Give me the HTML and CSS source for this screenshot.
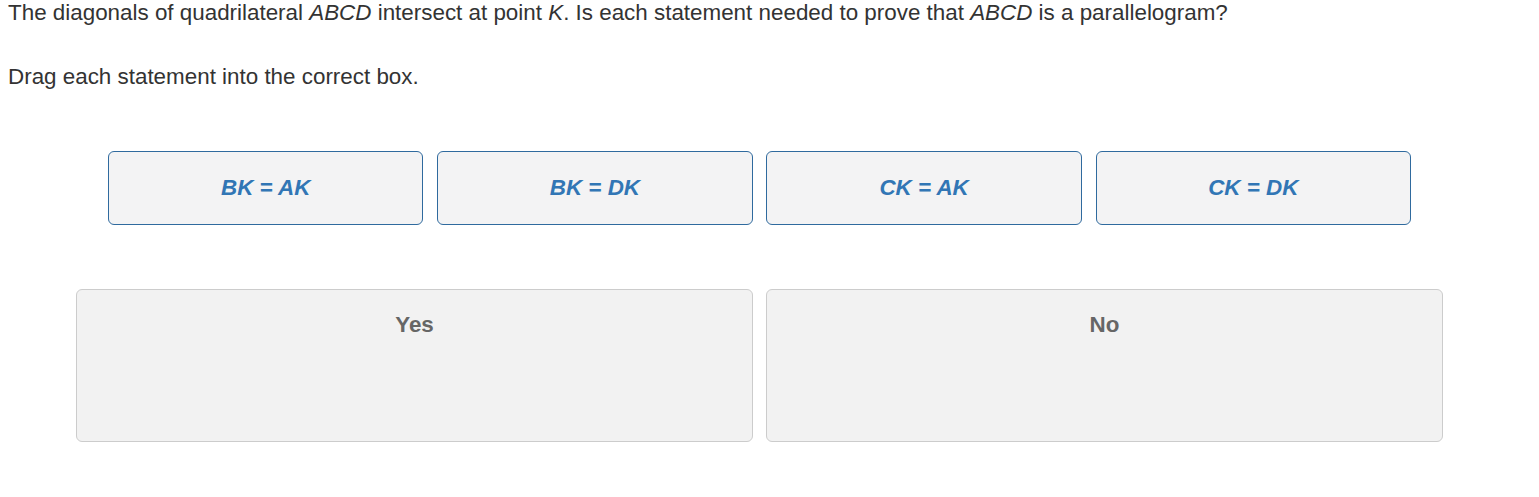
FILE: index.html
```html
<!DOCTYPE html>
<html>
<head>
<meta charset="utf-8">
<link rel="stylesheet" href="styles.css">
</head>
<body>
<div class="page">
  <p class="question">The diagonals of quadrilateral <i>ABCD</i> intersect at point <i>K</i>. Is each statement needed to prove that <i>ABCD</i> is a parallelogram?</p>
  <p class="instruction">Drag each statement into the correct box.</p>
  <div class="tiles">
    <div class="tile">BK = AK</div>
    <div class="tile">BK = DK</div>
    <div class="tile">CK = AK</div>
    <div class="tile">CK = DK</div>
  </div>
  <div class="zones">
    <div class="zone"><div class="zone-label">Yes</div></div>
    <div class="zone"><div class="zone-label">No</div></div>
  </div>
</div>
</body>
</html>
```
FILE: styles.css
```css
html, body {
  margin: 0;
  padding: 0;
  background: #fff;
}
.page {
  font-family: "Liberation Sans", Arial, sans-serif;
  color: #333;
  font-size: 22.4px;
  padding: 0 8px;
}
.question {
  margin: 0;
  line-height: 26px;
}
.instruction {
  margin: 38px 0 0 0;
  line-height: 26px;
}
.tiles {
  display: flex;
  gap: 13.7px;
  margin: 61px 0 0 100px;
  width: 1303px;
}
.tile {
  flex: 1;
  height: 72px;
  border: 1px solid #2f6a9e;
  border-radius: 6px;
  background: #f3f3f4;
  color: #3176b5;
  font-weight: bold;
  font-style: italic;
  display: flex;
  align-items: center;
  justify-content: center;
}
.zones {
  display: flex;
  gap: 13px;
  margin: 64px 0 0 68px;
  width: 1367px;
}
.zone {
  flex: 1;
  height: 151px;
  border: 1px solid #cccccc;
  border-radius: 6px;
  background: #f2f2f2;
}
.zone-label {
  text-align: center;
  font-weight: bold;
  color: #666;
  margin-top: 23px;
  line-height: 24px;
}
```
